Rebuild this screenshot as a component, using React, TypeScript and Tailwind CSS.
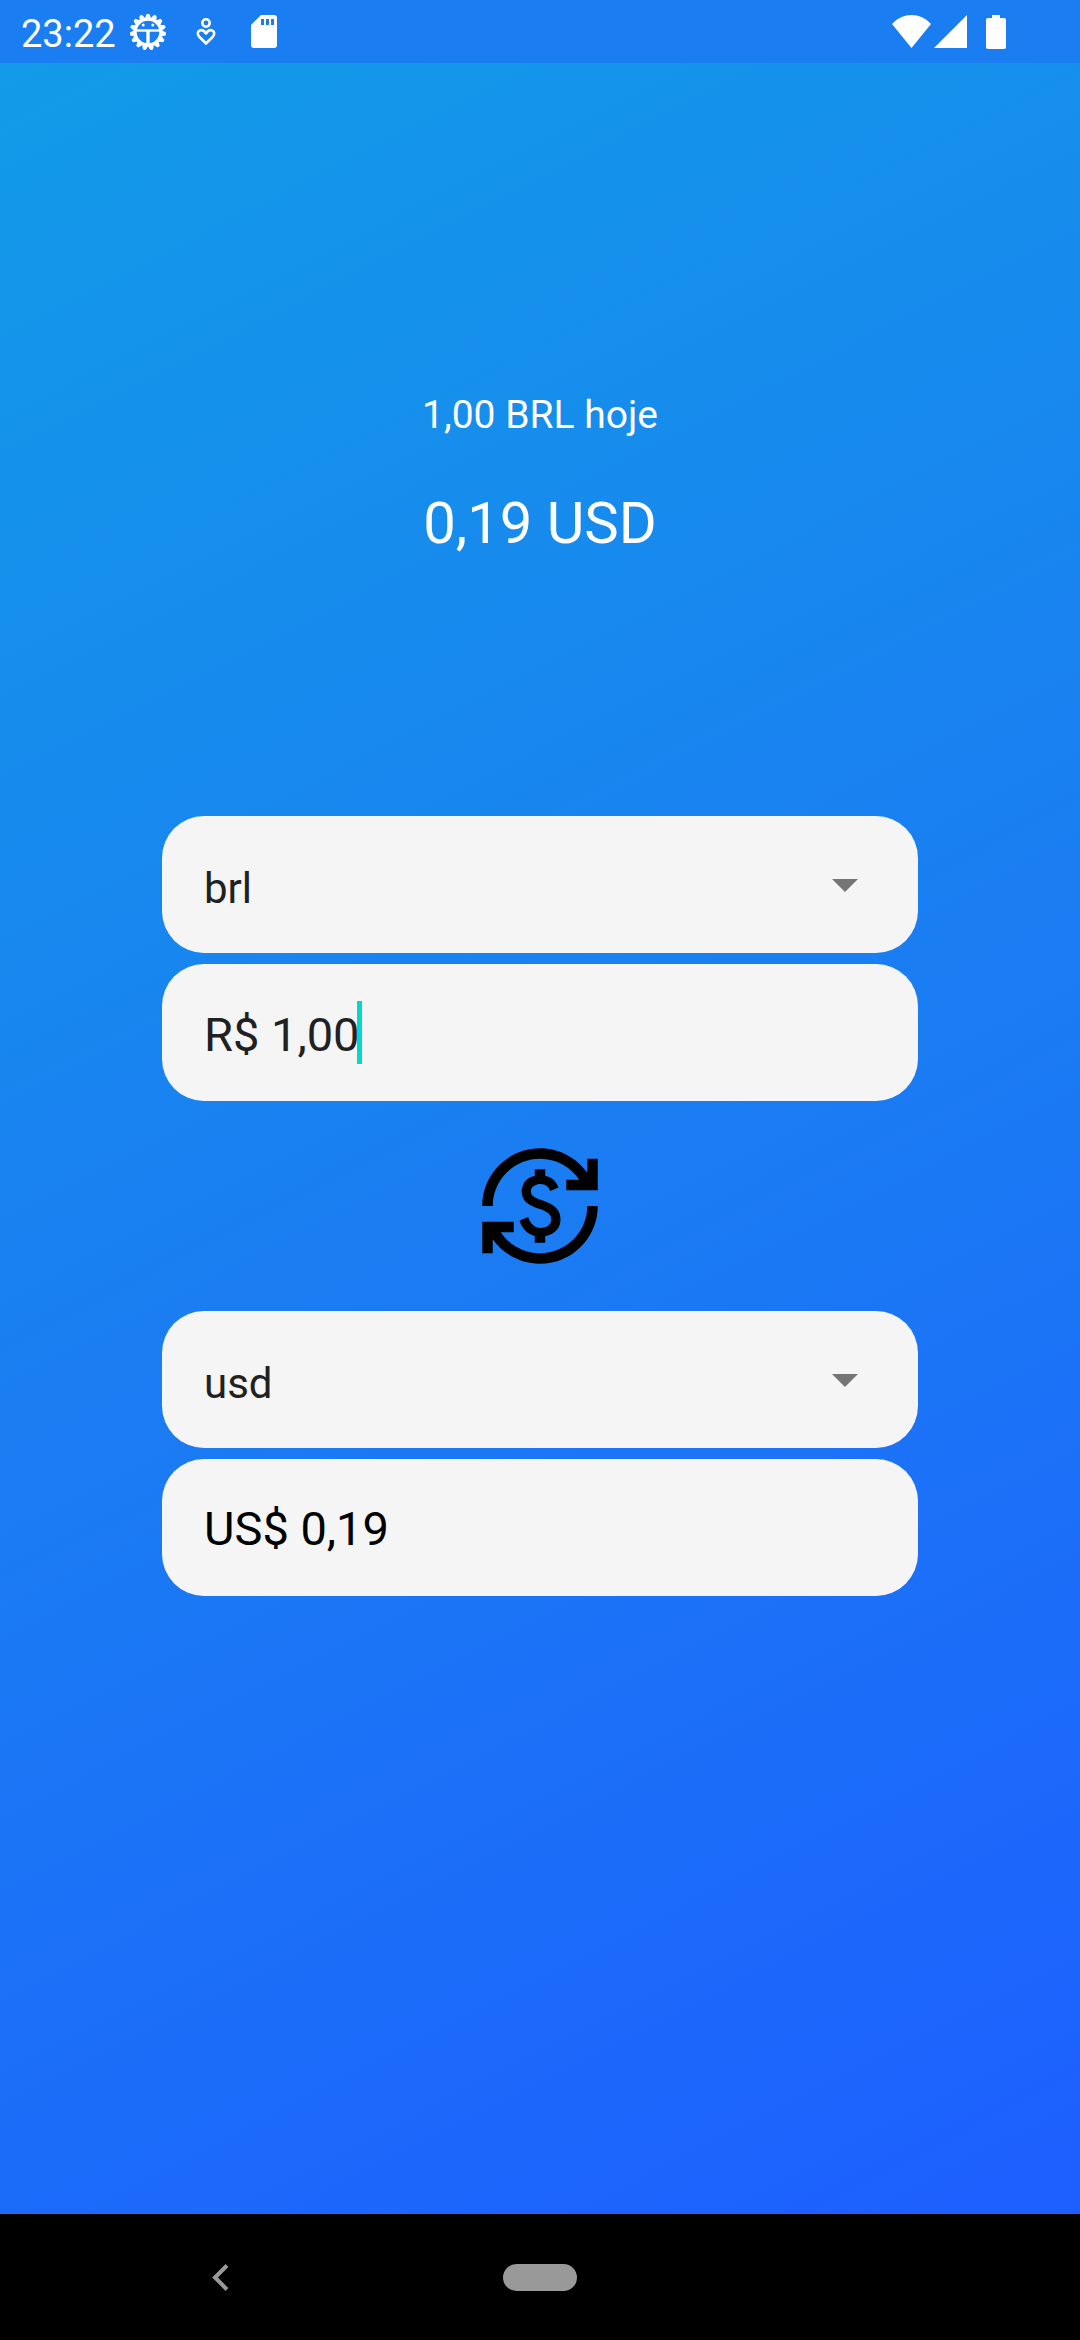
import { useState } from "react";

const box = "w-full rounded-[42px] bg-[#f5f5f5] px-[42px] h-[137px] focus:outline-none";

function GearIcon() {
  const teeth = Array.from({ length: 15 }, (_, i) => i * 24 + 12);
  return (
    <svg viewBox="-18 -18 36 36" className="size-9" fill="none" aria-hidden="true">
      {teeth.map((a) => (
        <path key={a} d="M-3.400 13 -1.300 18.200H1.300L3.400 13Z" fill="#fff" transform={`rotate(${a})`} />
      ))}
      <circle r="12.8" stroke="#fff" strokeWidth="3" />
      <path d="M-12-1.500H12" stroke="#fff" strokeWidth="2.4" />
      <path d="M0-1V13" stroke="#fff" strokeWidth="3.4" />
      <circle cx="-4.8" cy="-7" r="1.5" fill="#fff" />
      <circle cx="4.8" cy="-7" r="1.5" fill="#fff" />
    </svg>
  );
}

function HeartPersonIcon() {
  return (
    <svg viewBox="0 0 20 28" className="h-7 w-5" fill="none" stroke="#fff" strokeWidth="2.6" aria-hidden="true">
      <circle cx="10" cy="5" r="3.7" />
      <path d="M10 25.500 3 18.500C-1 13.500 6 9 10 15.500 14 9 21 13.500 17 18.500Z" strokeLinejoin="round" />
    </svg>
  );
}

function SdCardIcon() {
  return (
    <svg viewBox="0 0 26 33" className="h-[33px] w-[26px]" aria-hidden="true">
      <path
        fill="#fff"
        fillRule="evenodd"
        d="M10 0H23a3 3 0 0 1 3 3V30a3 3 0 0 1-3 3H3a3 3 0 0 1-3-3V10ZM10 4V10H13V4ZM15 4V10H18V4ZM20 4V10H23V4Z"
      />
    </svg>
  );
}

function StatusBar() {
  return (
    <header className="flex h-[63px] items-center justify-between bg-[#1a7ef2] pr-[74px] pl-[21px] text-white">
      <div className="flex items-center">
        <span className="w-[109px] pt-1 text-[38px] leading-[44px]">23:22</span>
        <GearIcon />
        <span className="ml-[30px]">
          <HeartPersonIcon />
        </span>
        <span className="ml-[35px]">
          <SdCardIcon />
        </span>
      </div>
      <div className="flex items-center">
        <svg viewBox="0 0 39 33" className="h-[33px] w-[39px]" fill="#fff" aria-hidden="true">
          <path d="M0 9C11-3 28-3 39 9L19.500 33Z" />
        </svg>
        <svg viewBox="0 0 33 33" className="ml-[3px] size-[33px]" fill="#fff" aria-hidden="true">
          <path d="M33 0V33H0Z" />
        </svg>
        <svg viewBox="0 0 20 34" className="ml-[19px] h-[34px] w-5" fill="#fff" aria-hidden="true">
          <path d="M6 0H14V3H18a2 2 0 0 1 2 2V32a2 2 0 0 1-2 2H2a2 2 0 0 1-2-2V5a2 2 0 0 1 2-2H6Z" />
        </svg>
      </div>
    </header>
  );
}

function CurrencySelect({ label, value, onChange }: { label: string; value: string; onChange: (v: string) => void }) {
  return (
    <div className="relative">
      <select
        aria-label={label}
        value={value}
        onChange={(e) => onChange(e.target.value)}
        className={`${box} block appearance-none pt-2 text-[42px] text-[#212121]`}
      >
        <option value="brl">brl</option>
        <option value="usd">usd</option>
      </select>
      <svg viewBox="0 0 26 13" className="pointer-events-none absolute top-[63px] right-[60px] h-[13px] w-[26px]" fill="#757575" aria-hidden="true">
        <path d="M0 0H26L13 13Z" />
      </svg>
    </div>
  );
}

export default function App() {
  const [from, setFrom] = useState("brl");
  const [to, setTo] = useState("usd");
  const [amount, setAmount] = useState("R$ 1,00");

  return (
    <div className="flex min-h-screen flex-col font-[Roboto,sans-serif]">
      <StatusBar />
      <main className="flex grow flex-col items-center bg-[linear-gradient(153deg,#129be8,#1a7ef2_50%,#1d5eff)] text-white">
        <p className="mt-[326px] text-[39px] leading-[52px]">1,00 BRL hoje</p>
        <h1 className="mt-12 text-[58px] leading-[68px]">0,19 USD</h1>
        <form className="mt-[259px] flex w-[70%] flex-col gap-[11px]" onSubmit={(e) => e.preventDefault()}>
          <CurrencySelect label="Moeda de origem" value={from} onChange={setFrom} />
          <div className="relative">
            <input
              aria-label="Valor"
              value={amount}
              onChange={(e) => setAmount(e.target.value)}
              className={`${box} block pt-1 text-[47px] text-[#212121]`}
            />
            <span className="absolute top-[37px] left-[195px] h-[63px] w-[5px] bg-[#03dac5]" />
          </div>
          <button type="button" aria-label="Converter" className="my-[31px] self-center text-black">
            <svg viewBox="0 0 24 24" className="size-[126px]" fill="currentColor" aria-hidden="true">
              <path d="M12.890 11.100c-1.780-.590-2.640-.960-2.640-1.900 0-1.020 1.110-1.390 1.810-1.390 1.310 0 1.790.990 1.900 1.340l1.580-.670c-.150-.450-.820-1.920-2.540-2.240V5h-2v1.260c-2.480.560-2.490 2.860-2.490 2.960 0 2.270 2.250 2.910 3.350 3.310 1.580.560 2.280 1.070 2.280 2.030 0 1.130-1.050 1.610-1.980 1.610-1.820 0-2.340-1.870-2.400-2.090l-1.660.670c.630 2.190 2.280 2.780 2.900 2.960V19h2v-1.240c.400-.090 2.900-.590 2.900-3.220 0-1.390-.610-2.610-3.010-3.440zM3 21H1v-6h6v2H4.520c1.610 2.410 4.360 4 7.480 4 4.970 0 9-4.030 9-9h2c0 6.080-4.920 11-11 11-3.720 0-7.010-1.850-9-4.670V21zM1 12C1 5.920 5.920 1 12 1c3.720 0 7.010 1.850 9 4.670V3h2v6h-6V7h2.480C17.870 4.590 15.120 3 12 3c-4.970 0-9 4.030-9 9H1z" />
            </svg>
          </button>
          <CurrencySelect label="Moeda de destino" value={to} onChange={setTo} />
          <output className={`${box} flex items-center pt-1 text-[47px] text-black`}>US$ 0,19</output>
        </form>
      </main>
      <nav className="grid h-[126px] grid-cols-[1fr_auto_1fr] items-center bg-black">
        <button type="button" aria-label="Voltar" className="ml-[212px] justify-self-start">
          <svg viewBox="0 0 17 27" className="h-[27px] w-[17px]" fill="none" stroke="#999" strokeWidth="4" aria-hidden="true">
            <path d="M15 1.500 3 13.500 15 25.500" />
          </svg>
        </button>
        <button type="button" aria-label="Início" className="h-[27px] w-[74px] rounded-full bg-[#999]" />
      </nav>
    </div>
  );
}
